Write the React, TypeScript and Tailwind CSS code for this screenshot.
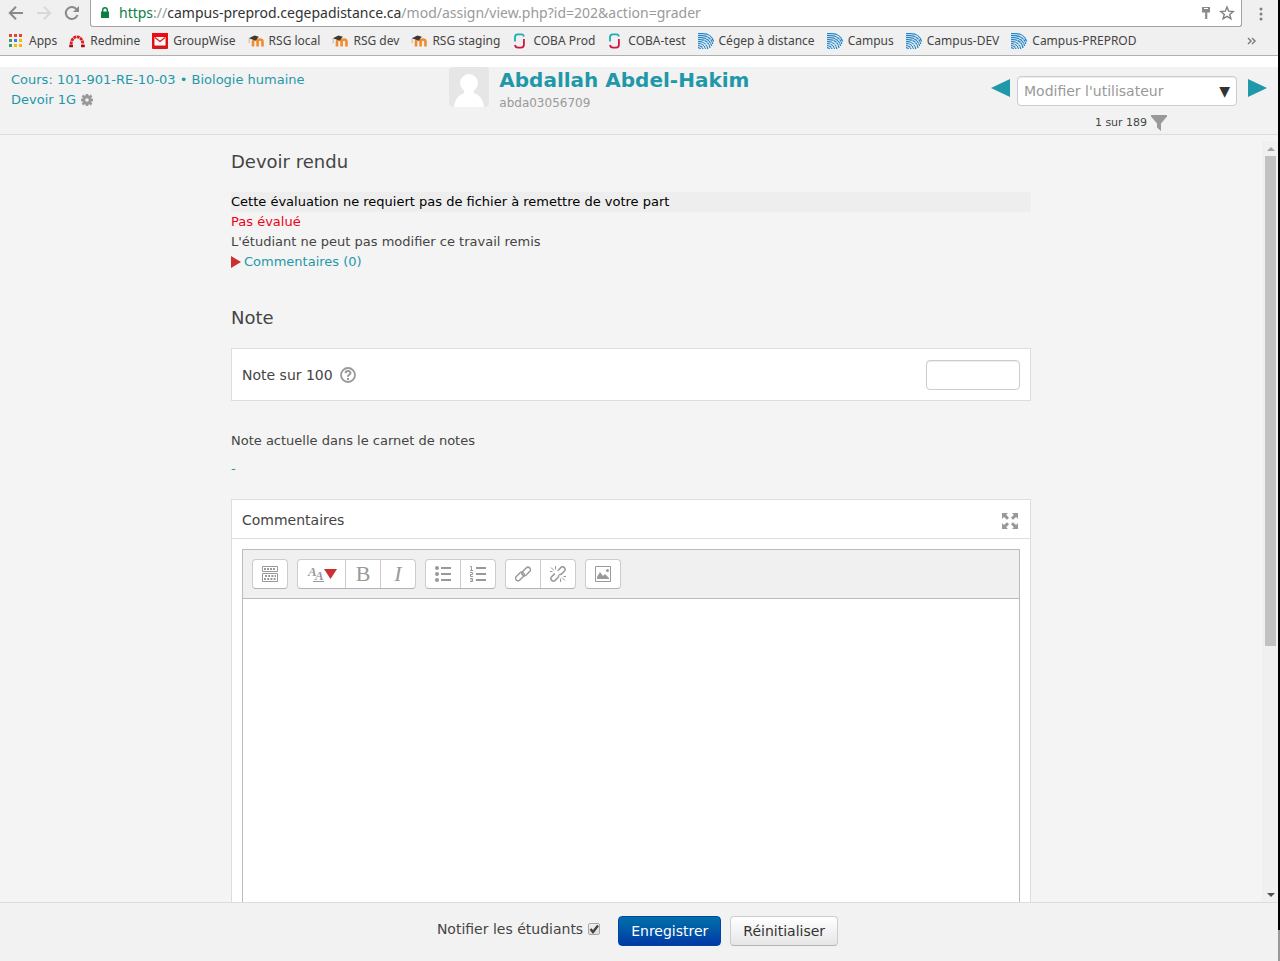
import type { ReactNode } from 'react';

const bookmarks = [
  { label: 'Apps', icon: <AppsIcon /> },
  { label: 'Redmine', icon: <RedmineIcon /> },
  { label: 'GroupWise', icon: <GroupWiseIcon /> },
  { label: 'RSG local', icon: <MoodleIcon /> },
  { label: 'RSG dev', icon: <MoodleIcon /> },
  { label: 'RSG staging', icon: <MoodleIcon /> },
  { label: 'COBA Prod', icon: <CobaIcon /> },
  { label: 'COBA-test', icon: <CobaIcon /> },
  { label: 'Cégep à distance', icon: <CegepIcon /> },
  { label: 'Campus', icon: <CegepIcon /> },
  { label: 'Campus-DEV', icon: <CegepIcon /> },
  { label: 'Campus-PREPROD', icon: <CegepIcon /> },
];

function AppsIcon() {
  const colors = ['#ea4335', '#ea4335', '#ea4335', '#34a05a', '#2a84f2', '#fbb605', '#34a05a', '#fbb605', '#fbb605'];
  return (
    <svg width="16" height="16" aria-hidden="true">
      {colors.map((fill, i) => (
        <rect key={i} x={1 + (i % 3) * 5} y={1 + Math.floor(i / 3) * 5} width="3" height="3" fill={fill} />
      ))}
    </svg>
  );
}

function RedmineIcon() {
  return (
    <svg width="16" height="16" fill="none" aria-hidden="true">
      <path d="M2 11.500C2.500 6.500 4.800 3.800 8 3.800s5.500 2.700 6 7.700" stroke="#e01a1f" strokeWidth="2.800" strokeDasharray="2.900 .6" />
      <path d="M.2 13h3.800M12 13h3.800" stroke="#a31015" strokeWidth="2.600" />
    </svg>
  );
}

function GroupWiseIcon() {
  return (
    <svg width="16" height="16" aria-hidden="true">
      <rect width="16" height="16" rx="1" fill="#d9141b" />
      <rect width="16" height="8" rx="1" fill="#ee0a10" />
      <rect x="2.500" y="4" width="11" height="8.500" fill="#fff" />
      <path d="M3 4.500l5 4 5-4" fill="none" stroke="#e01018" strokeWidth="1.200" />
    </svg>
  );
}

function MoodleIcon() {
  return (
    <svg width="16" height="16" fill="none" aria-hidden="true">
      <path d="M5 13.500V9a2.200 2.200 0 0 1 4.600 0v4.500M9.600 9a2.400 2.400 0 0 1 4.900 0v4.500" stroke="#f28a2e" strokeWidth="2.600" />
      <path d="M.8 5.200L6.500 2.600l4.300 1.200-3 3.600-3.400-1z" fill="#3c3936" />
      <path d="M1.200 5.400v5" stroke="#c9b59c" />
    </svg>
  );
}

function CobaIcon() {
  return (
    <svg width="16" height="16" fill="none" strokeWidth="1.800" aria-hidden="true">
      <path d="M3 8.500V4A2.800 2.800 0 0 1 5.800 1.400H9.500A2.500 2.500 0 0 1 11.900 3.500" stroke="#1badb3" />
      <path d="M11.900 6v5.700a2.900 2.900 0 0 1-2.900 2.900H6.200A3.200 3.200 0 0 1 3 12" stroke="#d0183f" />
    </svg>
  );
}

function CegepIcon() {
  return (
    <svg width="16" height="16" viewBox="0 0 16 16" fill="none" aria-hidden="true">
      <g stroke="#2586c8" strokeWidth="1.300">
        <path d="M0 .7h5C10.500 .7 14.500 4 15.500 8.500" />
        <path d="M0 2.700h4C9.500 2.700 14 6 14.800 11" />
        <path d="M0 4.700h3C8.500 4.700 12.800 8 13.700 13" />
        <path d="M0 6.700h2C7.500 6.700 11.200 10 12 15" />
        <path d="M0 8.700h1.500C5.500 8.700 9 11.500 9.800 16" />
        <path d="M0 10.700h1C4 10.700 6.800 13 7.500 16" />
        <path d="M0 12.700c2.500 0 4.500 1.300 5 3.300" />
        <path d="M0 14.700c1.200 0 2.200.5 2.600 1.300" />
      </g>
      <path d="M3 16L14 5M6 16l9-8M1 14L11 2.500" stroke="#f0f0f0" strokeWidth=".5" />
    </svg>
  );
}

function BrowserBar() {
  return (
    <div className="shrink-0 border-b border-[#b1b1b1] bg-[#f0f0f0] font-['Noto_Sans',sans-serif]">
      <div className="flex h-[27px] items-stretch pr-3">
        <div className="flex w-[90px] shrink-0 items-center gap-3 pl-2">
          <button type="button" aria-label="Précédent">
            <svg width="16" height="16" fill="none" stroke="#8a8a8a" strokeWidth="2">
              <path d="M15 7H2M8 .8L1.800 7 8 13.200" />
            </svg>
          </button>
          <button type="button" aria-label="Suivant">
            <svg width="16" height="16" fill="none" stroke="#d8d8d8" strokeWidth="2">
              <path d="M1 7h13M8 .8L14.200 7 8 13.200" />
            </svg>
          </button>
          <button type="button" aria-label="Actualiser">
            <svg width="16" height="16" fill="none" stroke="#8a8a8a" strokeWidth="2">
              <path d="M12.500 3.200A6 6 0 1 0 13.500 9" />
              <path d="M15 0v6H9z" fill="#8a8a8a" stroke="none" />
            </svg>
          </button>
        </div>
        <div className="flex flex-1 items-center rounded-b-[3px] border border-t-0 border-[#a3a3a3] bg-white pr-[6px] pl-[9px]">
          <svg width="10" height="12" aria-hidden="true">
            <rect x="1" y="4.500" width="8" height="6.500" rx=".6" fill="#0b8043" />
            <path d="M2.700 5V3a2.300 2.300 0 0 1 4.600 0v2" fill="none" stroke="#0b8043" strokeWidth="1.400" />
          </svg>
          <div className="ml-[9px] flex-1 text-sm whitespace-nowrap text-[#9a9a9a]">
            <span className="text-[#0b8043]">https</span>://
            <span className="text-[#333]">campus-preprod.cegepadistance.ca</span>
            /mod/assign/view.php?id=202&amp;action=grader
          </div>
          <svg width="10" height="14" fill="#8a8a8a" aria-hidden="true">
            <path d="M1 1h8v5.500H6.300V13H4.600l-1-1 1-1-1-1 .6-.8V6.500H1z" />
            <path d="M3 2.500h4" stroke="#fff" />
          </svg>
          <button type="button" aria-label="Ajouter aux favoris" className="ml-2">
            <svg width="16" height="16" viewBox="0 0 16 16" fill="none" stroke="#808080" strokeWidth="1.400">
              <path d="M8 2l1.700 4.200 4.500.3-3.500 2.900 1.200 4.400L8 11.400l-3.900 2.400 1.200-4.400L1.800 6.500l4.500-.3z" />
            </svg>
          </button>
        </div>
        <button type="button" aria-label="Menu" className="ml-4">
          <svg width="8" height="16" fill="#808080">
            <circle cx="3" cy="3" r="1.500" />
            <circle cx="3" cy="8" r="1.500" />
            <circle cx="3" cy="13" r="1.500" />
          </svg>
        </button>
      </div>
      <nav className="flex h-7 items-center gap-3 pr-5 pl-2 text-xs text-[#444]">
        {bookmarks.map((b) => (
          <a key={b.label} href="#" className="flex items-center gap-[5px] whitespace-nowrap">
            {b.icon}
            {b.label}
          </a>
        ))}
        <button type="button" aria-label="Autres favoris" className="ml-auto">
          <svg width="12" height="8" fill="none" stroke="#808080" strokeWidth="1.500">
            <path d="M2 1l3 3-3 3M6 1l3 3-3 3" />
          </svg>
        </button>
      </nav>
    </div>
  );
}

function GraderHeader() {
  return (
    <header className="mt-[11px] flex h-[68px] shrink-0 border-b border-[#ddd] bg-[#f2f2f2]">
      <div className="w-[35%] pt-[3px] pl-[11px] text-[13px] leading-5 text-[#1f98a9]">
        <a href="#" className="block">Cours: 101-901-RE-10-03 • Biologie humaine</a>
        <div className="flex items-center gap-1">
          <a href="#">Devoir 1G</a>
          <button type="button" aria-label="Paramètres">
            <svg width="14" height="14" viewBox="0 0 14 14" fill="none" stroke="#999">
              <circle cx="7" cy="7" r="3.300" strokeWidth="3" />
              <path
                d="M7 1v2M7 11v2M1 7h2M11 7h2M2.500 2.500l1.700 1.700M9.800 9.800l1.700 1.700M2.500 11.500l1.700-1.700M9.800 4.200l1.700-1.700"
                strokeWidth="2.600"
              />
            </svg>
          </button>
        </div>
      </div>
      <div className="flex flex-1 gap-[10px] pl-[2px]">
        <svg width="40" height="40" className="shrink-0" role="img" aria-label="Avatar">
          <rect width="40" height="40" rx="4" fill="#e6e6e6" />
          <circle cx="20" cy="16" r="9" fill="#fff" />
          <path d="M5 40c1-9 6-14.500 15-14.500S34 31 35 40z" fill="#fff" />
          <path d="M15 22h10v6H15z" fill="#fff" />
        </svg>
        <div>
          <h1 className="pt-[1px] text-xl leading-6 font-bold whitespace-nowrap text-[#1f98a9]">
            <a href="#">Abdallah Abdel-Hakim</a>
          </h1>
          <p className="pt-[1px] text-xs leading-5 text-[#999]">abda03056709</p>
        </div>
      </div>
      <div className="pt-[9px] pr-[11px]">
        <div className="flex">
          <button type="button" aria-label="Utilisateur précédent" className="mr-[7px] h-6">
            <svg width="19" height="18" fill="#1f98a9">
              <path d="M19 0v18L0 9z" />
            </svg>
          </button>
          <label className="flex h-[30px] w-[220px] items-center rounded border border-[#ccc] bg-white px-[6px] text-sm text-[#333] shadow-[inset_0_1px_1px_rgba(0,0,0,0.075)]">
            <input
              aria-label="Modifier l'utilisateur"
              placeholder="Modifier l'utilisateur"
              className="min-w-0 flex-1 outline-none placeholder:text-[#999]"
            />
            <span aria-hidden="true">▼</span>
          </label>
          <button type="button" aria-label="Utilisateur suivant" className="ml-[11px] h-6">
            <svg width="19" height="18" fill="#1f98a9">
              <path d="M0 0v18l19-9z" />
            </svg>
          </button>
        </div>
        <div className="flex items-center justify-center gap-1 pt-[9px] pl-1 text-[11px] leading-4 text-[#444]">
          1 sur 189
          <button type="button" aria-label="Filtrer">
            <svg width="16" height="16" fill="#999">
              <path d="M0 0h16v1.500L10 8.500V16l-4-3.500v-4L0 1.500z" />
            </svg>
          </button>
        </div>
      </div>
    </header>
  );
}

function ToolGroup({ children }: { children: ReactNode }) {
  return (
    <div className="flex h-[30px] divide-x divide-[#ccc] rounded border border-[#ccc] border-b-[#b3b3b3] bg-white">
      {children}
    </div>
  );
}

function Tool({ label, wide, children }: { label: string; wide?: boolean; children: ReactNode }) {
  return (
    <button
      type="button"
      aria-label={label}
      className={`box-content flex items-center justify-center text-[#999] ${wide ? 'w-[47px]' : 'w-[34px]'}`}
    >
      {children}
    </button>
  );
}

function EditorToolbar() {
  return (
    <div className="flex gap-[9px] border-b border-[#bbb] bg-[#f0f0f0] p-[9px]">
      <ToolGroup>
        <Tool label="Afficher plus de boutons">
          <svg width="16" height="16" fill="none" stroke="currentColor">
            <path d="M.5.500h15v5H.5zM.5 7.500h15v8H.5z" />
            <path d="M2 3h12" strokeWidth="2" strokeDasharray="2 1" />
            <path d="M3 10h11M2 13h12" strokeWidth="2" strokeDasharray="2 1.200" />
          </svg>
        </Tool>
      </ToolGroup>
      <ToolGroup>
        <Tool label="Styles de paragraphe" wide>
          <svg width="30" height="18" fill="currentColor" fontFamily="Liberation Serif, serif" fontStyle="italic">
            <text x="1" y="11" fontSize="13" fontWeight="bold">A</text>
            <text x="8" y="15" fontSize="13" fontWeight="bold">A</text>
            <path d="M6 16.500h11" stroke="currentColor" />
            <path d="M17 4h13l-6.500 10z" fill="#cb2f31" />
          </svg>
        </Tool>
        <Tool label="Gras">
          <span className="font-['Liberation_Serif',serif] text-[22px] leading-6">B</span>
        </Tool>
        <Tool label="Italique">
          <span className="font-['Liberation_Serif',serif] text-[22px] leading-6 italic">I</span>
        </Tool>
      </ToolGroup>
      <ToolGroup>
        <Tool label="Liste à puces">
          <svg width="16" height="16" fill="currentColor">
            <circle cx="2" cy="2" r="2" />
            <circle cx="2" cy="8" r="2" />
            <circle cx="2" cy="14" r="2" />
            <path d="M6 1h10v2H6zM6 7h10v2H6zM6 13h10v2H6z" />
          </svg>
        </Tool>
        <Tool label="Liste numérotée">
          <svg width="16" height="16" fill="none" stroke="currentColor">
            <path d="M0 .5h1.500V4M0 4.500h3" />
            <path d="M0 6.500h2.500v2H.5v2H3" />
            <path d="M0 12.500h2.500v3H0M.5 14h2" />
            <path d="M6 2h10M6 8h10M6 14h10" strokeWidth="2" />
          </svg>
        </Tool>
      </ToolGroup>
      <ToolGroup>
        <Tool label="Lien">
          <svg width="16" height="16" viewBox="0 0 16 16" fill="none" stroke="currentColor" strokeWidth="1.500">
            <g transform="rotate(-45 8 8)">
              <rect x="-1" y="5" width="10" height="5" rx="2.500" />
              <rect x="7" y="6" width="10" height="5" rx="2.500" />
            </g>
          </svg>
        </Tool>
        <Tool label="Supprimer le lien">
          <svg width="16" height="16" viewBox="0 0 16 16" fill="none" stroke="currentColor" strokeWidth="1.500">
            <g transform="rotate(-45 8 8)">
              <path d="M6 5.500H1.500a2.500 2.500 0 0 0 0 5H6A2.500 2.500 0 0 0 7.500 9" />
              <path d="M10 5.500h4.500a2.500 2.500 0 0 1 0 5H10A2.500 2.500 0 0 1 8.500 9" />
            </g>
            <path d="M5.500 0v3.500M1 1.500l3 3M0 5.500h2.500M10.500 12.500V16M12 11.500l3 3M13.500 10.500H16" strokeWidth="1" />
          </svg>
        </Tool>
      </ToolGroup>
      <ToolGroup>
        <Tool label="Image">
          <svg width="16" height="16" fill="currentColor">
            <path d="M.5.500h15v15H.5z" fill="none" stroke="currentColor" />
            <path d="M2 13V11l3-5 3 4 2-2 4 4v1z" />
            <circle cx="12.500" cy="4.500" r="1.500" />
          </svg>
        </Tool>
      </ToolGroup>
    </div>
  );
}

function GradePanel() {
  return (
    <main className="min-w-0 flex-1 overflow-hidden">
      <div className="mx-auto max-w-[800px] text-[13px] leading-5">
        <h2 className="pt-[17px] text-lg leading-5">Devoir rendu</h2>
        <p className="mt-5 bg-[#eee] text-black">Cette évaluation ne requiert pas de fichier à remettre de votre part</p>
        <p className="text-[#f00015]">Pas évalué</p>
        <p>L'étudiant ne peut pas modifier ce travail remis</p>
        <a href="#" className="flex items-center gap-[3px] text-[#1f98a9]">
          <svg width="10" height="12" fill="#cb2f31" aria-hidden="true">
            <path d="M0 0v12l10-6z" />
          </svg>
          Commentaires (0)
        </a>

        <h2 className="mt-9 text-lg leading-5">Note</h2>
        <div className="mt-5 flex h-[53px] items-center justify-between border border-[#ddd] bg-white px-[10px] text-sm">
          <div className="flex items-center gap-[7px]">
            <label htmlFor="grade">Note sur 100</label>
            <button type="button" aria-label="Aide">
              <svg width="16" height="16" fill="none" stroke="#999">
                <circle cx="8" cy="8" r="7" strokeWidth="1.800" />
                <path d="M5.600 6.200c0-3 4.900-3 4.900-.2C10.500 7.800 8 7.600 8 9.700" strokeWidth="2" />
                <path d="M7 11h2v2H7z" fill="#999" stroke="none" />
              </svg>
            </button>
          </div>
          <input
            id="grade"
            type="text"
            className="h-[30px] w-[94px] rounded border border-[#ccc] px-[6px] shadow-[inset_0_1px_1px_rgba(0,0,0,0.075)]"
          />
        </div>

        <p className="mt-[30px]">Note actuelle dans le carnet de notes</p>
        <a href="#" className="mt-2 block text-[#1f98a9]">-</a>

        <section className="mt-5 border border-[#ddd] bg-white">
          <div className="flex h-[39px] items-center justify-between border-b border-[#ddd] px-[10px] text-sm">
            <label htmlFor="feedback" className="pt-[2px]">Commentaires</label>
            <button type="button" aria-label="Agrandir" className="pt-1 pr-[2px]">
              <svg width="16" height="16" fill="#999">
                <path d="M0 0h6L4.200 1.800 7 4.700 5 6.700 1.900 4 0 6z" />
                <path d="M16 0v6l-1.900-2L11 6.700 9 4.700l2.800-2.900L10 0z" />
                <path d="M0 16v-6l1.900 2L5 9.300l2 2-2.800 2.900L6 16z" />
                <path d="M16 16h-6l1.800-1.800L9 11.300l2-2 3.100 2.700L16 10z" />
              </svg>
            </button>
          </div>
          <div className="m-[10px] border border-[#bbb]">
            <EditorToolbar />
            <textarea id="feedback" rows={25} className="block w-full resize-none bg-white p-1 outline-none" />
          </div>
        </section>
      </div>
    </main>
  );
}

function Scrollbar() {
  return (
    <div className="mt-[6px] flex w-4 shrink-0 flex-col items-center bg-[#f0f0f0] pl-[1px]" aria-hidden="true">
      <svg width="15" height="15" fill="#a3a3a3" className="shrink-0">
        <path d="M4 10h8L8 6z" />
      </svg>
      <div className="flex-1 self-stretch px-[2px]">
        <div className="h-[67%] bg-[#c1c1c1]" />
      </div>
      <svg width="15" height="15" fill="#505050" className="shrink-0">
        <path d="M4 6h8l-4 4z" />
      </svg>
    </div>
  );
}

function GraderFooter() {
  return (
    <footer className="flex h-[59px] shrink-0 items-center justify-center border-t border-[#ddd] bg-[#f2f2f2] pr-[3px] pb-[2px] text-sm">
      <label className="flex items-center gap-[5px] pb-1">
        Notifier les étudiants
        <span className="relative flex">
          <input
            type="checkbox"
            defaultChecked
            className="peer size-3 appearance-none rounded-[2px] border border-[#a8a8a8] bg-linear-to-b from-[#f0f0f0] to-[#dedede]"
          />
          <svg
            width="12"
            height="12"
            className="pointer-events-none absolute inset-0 hidden peer-checked:block"
            fill="none"
            stroke="#444"
            strokeWidth="2.400"
          >
            <path d="M2.500 6l2.500 3 5-6.500" />
          </svg>
        </span>
      </label>
      <button
        type="button"
        className="ml-[18px] h-[30px] rounded border border-[#0044aa] bg-linear-to-b from-[#0070a8] to-[#0037a5] px-3 text-white"
      >
        Enregistrer
      </button>
      <button
        type="button"
        className="ml-[9px] h-[30px] rounded border border-[#ccc] border-b-[#b3b3b3] bg-linear-to-b from-white to-[#e6e6e6] px-3 text-[#333]"
      >
        Réinitialiser
      </button>
    </footer>
  );
}

export default function App() {
  return (
    <div className="flex h-screen bg-white font-['DejaVu_Sans',sans-serif] text-[#444]">
      <div className="flex min-w-0 flex-1 flex-col">
        <BrowserBar />
        <GraderHeader />
        <div className="flex min-h-0 flex-1 bg-[#f4f4f4]">
          <GradePanel />
          <Scrollbar />
        </div>
        <GraderFooter />
      </div>
      <div className="flex w-[2px] shrink-0 flex-col bg-black">
        <div className="mt-auto h-[31px] bg-[#999]" />
      </div>
    </div>
  );
}
